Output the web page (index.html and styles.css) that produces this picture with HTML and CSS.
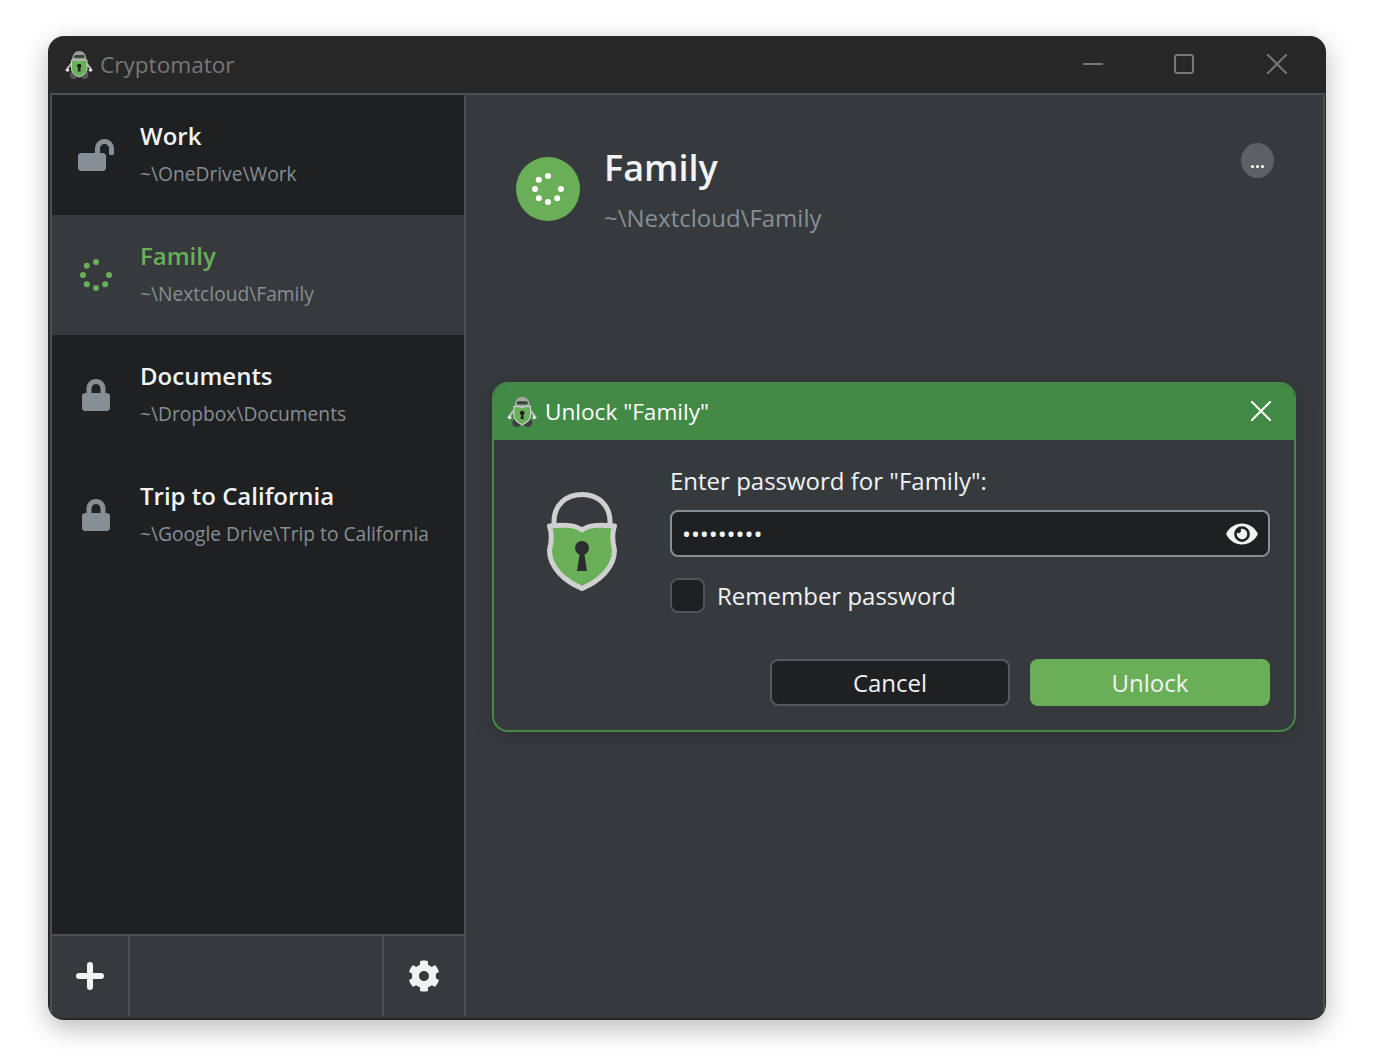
FILE: index.html
```html
<!DOCTYPE html>
<html lang="en">
<head>
    <meta charset="UTF-8">
    <title>Cryptomator</title>
    <link rel="stylesheet" href="styles.css">
</head>
<body>
    <div class="window">
        <div class="titlebar">
            <svg class="logo" viewBox="0 0 28 28">
                <path d="M7 12 2 18M21 12l5 6" fill="none" stroke="#a9acae" stroke-width="2.200"/>
                <path d="M0 19l3-2 1.500 2.500-2 1.500zM28 19l-3-2-1.500 2.500 2 1.500z" fill="#e4e4e4"/>
                <circle cx="9" cy="24" r="4" fill="#54575a"/>
                <circle cx="19.500" cy="24" r="4" fill="#54575a"/>
                <path d="M7 10C7 3 10 0 14.200 0s7.300 3 7.300 10z" fill="#9a9c9e"/>
                <rect x="9" y="4" width="10.500" height="3" rx="1.500" fill="#344a34"/>
                <path d="M6.500 9c3 0 5.700-.5 7.700 1 2-1.500 4.800-1 7.800-1v8.500c0 4.500-3.500 6.500-7.800 8.500-4.200-2-7.700-4-7.700-8.500z" fill="#69af58" stroke="#d2d2d2"/>
                <circle cx="14.200" cy="15" r="2.200" fill="#222"/>
                <path d="M13.500 16h1.400l.9 4.500h-3.200z" fill="#222"/>
            </svg>
            <span class="app-name">Cryptomator</span>
            <div class="win-controls">
                <svg viewBox="0 0 20 20"><path d="M0 10h20" /></svg>
                <svg viewBox="0 0 20 20"><rect x="1" y="1" width="18" height="18" rx="2"/></svg>
                <svg viewBox="0 0 20 20"><path d="M0 0l20 20M20 0 0 20"/></svg>
            </div>
        </div>

        <div class="main">
            <div class="sidebar">
                <div class="vault-list">
                    <div class="vault-row">
                        <div class="vault-icon">
                            <svg class="icon-unlock" viewBox="0 0 576 512"><path d="M423.500 0C339.500.3 272 69.500 272 153.500V224H48c-26.500 0-48 21.500-48 48v192c0 26.500 21.500 48 48 48h352c26.500 0 48-21.500 48-48V272c0-26.500-21.500-48-48-48h-48v-71.100c0-39.600 31.700-72.500 71.300-72.900 40-.4 72.700 32.100 72.700 72v80c0 13.300 10.700 24 24 24h32c13.300 0 24-10.700 24-24v-80C576 68 507.500-.3 423.500 0z"/></svg>
                        </div>
                        <div class="vault-text">
                            <div class="vault-name">Work</div>
                            <div class="vault-path">~\OneDrive\Work</div>
                        </div>
                    </div>
                    <div class="vault-row selected">
                        <div class="vault-icon">
                            <svg class="spinner" viewBox="0 0 32 32">
                                <circle cx="16" cy="3" r="3"/><circle cx="6.800" cy="6.800" r="3"/><circle cx="3" cy="16" r="3"/><circle cx="6.800" cy="25.200" r="3"/><circle cx="16" cy="29" r="3"/><circle cx="25.200" cy="25.200" r="3"/><circle cx="29" cy="16" r="3"/>
                            </svg>
                        </div>
                        <div class="vault-text">
                            <div class="vault-name">Family</div>
                            <div class="vault-path">~\Nextcloud\Family</div>
                        </div>
                    </div>
                    <div class="vault-row">
                        <div class="vault-icon">
                            <svg class="icon-lock" viewBox="0 0 448 512"><path d="M400 224h-24v-72C376 68.200 307.800 0 224 0S72 68.200 72 152v72H48c-26.500 0-48 21.500-48 48v192c0 26.500 21.500 48 48 48h352c26.500 0 48-21.500 48-48V272c0-26.500-21.500-48-48-48zm-104 0H152v-72c0-39.700 32.300-72 72-72s72 32.300 72 72v72z"/></svg>
                        </div>
                        <div class="vault-text">
                            <div class="vault-name">Documents</div>
                            <div class="vault-path">~\Dropbox\Documents</div>
                        </div>
                    </div>
                    <div class="vault-row">
                        <div class="vault-icon">
                            <svg class="icon-lock" viewBox="0 0 448 512"><path d="M400 224h-24v-72C376 68.200 307.800 0 224 0S72 68.200 72 152v72H48c-26.500 0-48 21.500-48 48v192c0 26.500 21.500 48 48 48h352c26.500 0 48-21.500 48-48V272c0-26.500-21.500-48-48-48zm-104 0H152v-72c0-39.700 32.300-72 72-72s72 32.300 72 72v72z"/></svg>
                        </div>
                        <div class="vault-text">
                            <div class="vault-name">Trip to California</div>
                            <div class="vault-path">~\Google Drive\Trip to California</div>
                        </div>
                    </div>
                </div>
                <div class="sidebar-footer">
                    <div class="footer-add">
                        <svg class="icon-plus" viewBox="0 0 28 28"><path d="M14 3v22M3 14h22"/></svg>
                    </div>
                    <div class="footer-gear">
                        <svg class="icon-gear" viewBox="0 0 512 512"><path d="M487.400 315.700l-42.600-24.600c4.300-23.200 4.300-47 0-70.200l42.600-24.600c4.900-2.800 7.100-8.600 5.500-14-11.100-35.600-30-67.800-54.700-94.600-3.800-4.100-10-5.100-14.800-2.300L380.800 110c-17.900-15.400-38.500-27.300-60.800-35.100V25.800c0-5.600-3.900-10.500-9.400-11.700-36.700-8.200-74.300-7.800-109.200 0-5.500 1.200-9.400 6.100-9.400 11.700V75c-22.200 7.900-42.800 19.800-60.800 35.100L88.700 85.500c-4.900-2.800-11-1.900-14.800 2.300-24.700 26.700-43.600 58.900-54.700 94.600-1.700 5.400.6 11.200 5.500 14L67.300 221c-4.300 23.200-4.300 47 0 70.200l-42.600 24.600c-4.900 2.800-7.100 8.600-5.500 14 11.100 35.600 30 67.800 54.700 94.600 3.800 4.100 10 5.100 14.800 2.300l42.600-24.600c17.900 15.400 38.500 27.300 60.800 35.100v49.200c0 5.600 3.900 10.500 9.400 11.700 36.700 8.200 74.300 7.800 109.200 0 5.500-1.200 9.400-6.100 9.400-11.700v-49.200c22.200-7.900 42.800-19.800 60.800-35.100l42.600 24.600c4.900 2.800 11 1.900 14.800-2.300 24.700-26.700 43.600-58.900 54.700-94.600 1.500-5.500-.7-11.300-5.600-14.100zM256 336c-44.100 0-80-35.900-80-80s35.900-80 80-80 80 35.900 80 80-35.900 80-80 80z"/></svg>
                    </div>
                </div>
            </div>

            <div class="detail">
                <div class="detail-header">
                    <div class="detail-badge">
                        <svg class="spinner-white" viewBox="0 0 32 32">
                            <circle cx="16" cy="3" r="3"/><circle cx="6.800" cy="6.800" r="3"/><circle cx="3" cy="16" r="3"/><circle cx="6.800" cy="25.200" r="3"/><circle cx="16" cy="29" r="3"/><circle cx="25.200" cy="25.200" r="3"/><circle cx="29" cy="16" r="3"/>
                        </svg>
                    </div>
                    <div class="detail-text">
                        <div class="detail-name">Family</div>
                        <div class="detail-path">~\Nextcloud\Family</div>
                    </div>
                    <div class="more-btn"><i></i><i></i><i></i></div>
                </div>

                <div class="dialog">
                    <div class="dialog-title">
                        <svg class="logo" viewBox="0 0 28 28">
                            <path d="M7 12 2 18M21 12l5 6" fill="none" stroke="#b9bcbe" stroke-width="2.200"/>
                            <path d="M0 19l3-2 1.500 2.500-2 1.500zM28 19l-3-2-1.500 2.500 2 1.500z" fill="#e4e4e4"/>
                            <circle cx="9" cy="24" r="4" fill="#3d4042"/>
                            <circle cx="19.500" cy="24" r="4" fill="#3d4042"/>
                            <path d="M7 10C7 3 10 0 14.200 0s7.300 3 7.300 10z" fill="#a5a7a8"/>
                            <rect x="9" y="4" width="10.500" height="3" rx="1.500" fill="#344a34"/>
                            <path d="M6.500 9c3 0 5.700-.5 7.700 1 2-1.500 4.800-1 7.800-1v8.500c0 4.500-3.500 6.500-7.800 8.500-4.200-2-7.700-4-7.700-8.500z" fill="#69af58" stroke="#d2d2d2"/>
                            <circle cx="14.200" cy="15" r="2.200" fill="#222"/>
                            <path d="M13.500 16h1.400l.9 4.500h-3.200z" fill="#222"/>
                        </svg>
                        <span class="dialog-caption">Unlock "Family"</span>
                        <svg class="dialog-close" viewBox="0 0 20 20"><path d="M0 0l20 20M20 0 0 20"/></svg>
                    </div>
                    <div class="dialog-body">
                        <div class="dialog-art">
                            <svg class="padlock" viewBox="0 0 70 100">
                                <path d="M7 36V30C7 13 19 2.500 35 2.500S63 13 63 30v6" fill="none" stroke="#d0d0d0" stroke-width="5"/>
                                <path d="M2.500 34C14 33 27 32 35 38 43 32 56 33 67.500 34 65 41 65 48 67.500 58 67.500 76 52 89 35 96.500 18 89 2.500 76 2.500 58 5 48 5 41 2.500 34Z" fill="#69af58" stroke="#d0d0d0" stroke-width="5" stroke-linejoin="round"/>
                                <circle cx="35" cy="56" r="7" fill="#2a2c2e"/>
                                <path d="M33 60h4l3 19H30z" fill="#2a2c2e"/>
                            </svg>
                        </div>
                        <div class="dialog-form">
                            <label class="pw-label">Enter password for "Family":</label>
                            <div class="pw-field">
                                <input class="pw-input" type="password" value="123456789">
                                <svg class="icon-eye" viewBox="0 0 576 512"><path d="M572.520 241.400C518.290 135.590 410.930 64 288 64S57.680 135.640 3.480 241.410a32.350 32.350 0 0 0 0 29.190C57.710 376.410 165.070 448 288 448s230.320-71.640 284.520-177.410a32.350 32.350 0 0 0 0-29.190zM288 400a144 144 0 1 1 144-144 143.930 143.930 0 0 1-144 144zm0-240a95.310 95.310 0 0 0-25.310 3.790 47.850 47.850 0 0 1-66.900 66.900A95.780 95.780 0 1 0 288 160z"/></svg>
                            </div>
                            <div class="remember">
                                <span class="checkbox"></span>
                                <span>Remember password</span>
                            </div>
                            <div class="dialog-buttons">
                                <div class="btn btn-cancel">Cancel</div>
                                <div class="btn btn-unlock">Unlock</div>
                            </div>
                        </div>
                    </div>
                </div>
            </div>
        </div>
    </div>
</body>
</html>
```

FILE: styles.css
```css
* {
    margin: 0;
    padding: 0;
    box-sizing: border-box;
}

body {
    background: #fff;
    font-family: 'Open Sans', sans-serif;
    font-size: 24px;
    color: #f1f3f5;
}

.window {
    display: flex;
    flex-direction: column;
    width: 1278px;
    height: 984px;
    margin: 36px 48px;
    background: #272727;
    border-radius: 16px;
    overflow: hidden;
    box-shadow: 0 8px 26px rgba(0, 0, 0, 0.28);
}

/* title bar */
.titlebar {
    display: flex;
    align-items: center;
    height: 57px;
    padding: 0 39px 0 17px;
    flex-shrink: 0;
}

.logo {
    width: 28px;
    height: 28px;
    flex-shrink: 0;
}

.app-name {
    margin-left: 7px;
    font-size: 22.600px;
    color: #777;
    line-height: 62px;
}

.win-controls {
    display: flex;
    gap: 72px;
    margin-left: auto;
    margin-top: -2px;
}

.win-controls svg {
    display: block;
    width: 20px;
    height: 20px;
    fill: none;
    stroke: #777;
    stroke-width: 2;
}

.win-controls svg:nth-child(2) {
    margin: 0 1px 0 -1px;
}

/* main area */
.main {
    display: flex;
    flex: 1;
    min-height: 0;
    margin: 0 1px 2px 2px;
    border: 2px solid #4a4f53;
    border-bottom: none;
    background: #363a3d;
}

.sidebar {
    display: flex;
    flex-direction: column;
    width: 414px;
    flex-shrink: 0;
}

.vault-list {
    flex: 1;
    background: #1f2022;
    border-bottom: 2px solid #4a4f53;
    border-right: 2px solid #4a4f53;
}

.vault-row {
    display: flex;
    align-items: center;
    height: 120px;
}

.vault-row.selected {
    background: #363a3d;
}

.vault-icon {
    display: flex;
    justify-content: center;
    width: 88px;
    flex-shrink: 0;
}

.vault-text {
    padding-bottom: 3px;
}

.vault-name {
    font-weight: 600;
    line-height: 32px;
    margin-bottom: 8px;
}

.vault-row.selected .vault-name {
    color: #69af58;
}

.vault-path {
    font-size: 19.200px;
    line-height: 28px;
    color: #868e96;
}

.icon-lock {
    display: block;
    width: 28px;
    height: 32px;
    fill: #868e96;
}

.icon-unlock {
    display: block;
    width: 36px;
    height: 32px;
    fill: #868e96;
}

.spinner {
    display: block;
    width: 32px;
    height: 32px;
    fill: #69af58;
}

/* sidebar footer */
.sidebar-footer {
    display: flex;
    justify-content: space-between;
    height: 82px;
    margin-left: -4px;
    padding-bottom: 2px;
}

.footer-add {
    display: flex;
    align-items: center;
    justify-content: center;
    width: 82px;
    padding-left: 4px;
    border-right: 2px solid #4a4f53;
}

.footer-gear {
    display: flex;
    align-items: center;
    justify-content: center;
    width: 84px;
    border-left: 2px solid #4a4f53;
    border-right: 2px solid #4a4f53;
}

.icon-plus {
    display: block;
    width: 28px;
    height: 28px;
    fill: none;
    stroke: #f1f3f5;
    stroke-width: 6;
    stroke-linecap: round;
}

.icon-gear {
    display: block;
    width: 32px;
    height: 32px;
    fill: #f1f3f5;
}

/* vault detail */
.detail {
    position: relative;
    flex: 1;
}

.detail-header {
    display: flex;
    align-items: flex-start;
    padding: 50px 49px 0 50px;
}

.detail-badge {
    display: flex;
    align-items: center;
    justify-content: center;
    width: 64px;
    height: 64px;
    margin-top: 12px;
    border-radius: 50%;
    background: #69af58;
    flex-shrink: 0;
}

.spinner-white {
    display: block;
    width: 32px;
    height: 32px;
    fill: #fff;
}

.detail-text {
    margin-left: 24px;
}

.detail-name {
    font-size: 36px;
    font-weight: 600;
    line-height: 48px;
    margin: -1px 0 10px;
}

.detail-path {
    line-height: 32px;
    color: #868e96;
}

.more-btn {
    display: flex;
    align-items: flex-end;
    justify-content: center;
    gap: 2px;
    width: 33px;
    height: 35px;
    margin: -2px 0 0 auto;
    padding-bottom: 10px;
    border-radius: 50%;
    background: #5d6165;
}

.more-btn i {
    width: 3px;
    height: 3px;
    border-radius: 50%;
    background: #fff;
}

/* unlock dialog */
.dialog {
    position: absolute;
    left: 26px;
    top: 287px;
    width: 804px;
    height: 350px;
    border: 2px solid #438a47;
    border-radius: 16px;
    background: #363a3d;
    overflow: hidden;
    box-shadow: 0 4px 20px rgba(0, 0, 0, 0.15);
}

.dialog-title {
    display: flex;
    align-items: center;
    height: 56px;
    padding: 0 23px 0 13px;
    background: #438a47;
}

.dialog-title .logo {
    width: 30px;
    height: 30px;
}

.dialog-caption {
    margin-left: 8px;
    font-size: 22.600px;
    line-height: 54px;
    color: #fff;
}

.dialog-close {
    display: block;
    width: 20px;
    height: 20px;
    margin: -2px 0 0 auto;
    fill: none;
    stroke: #fff;
    stroke-width: 2;
}

.dialog-body {
    display: flex;
    padding: 25px 24px 0 0;
}

.dialog-art {
    display: flex;
    justify-content: center;
    width: 176px;
    padding-top: 27px;
    flex-shrink: 0;
}

.padlock {
    display: block;
    width: 70px;
    height: 100px;
}

.dialog-form {
    flex: 1;
}

.pw-label {
    display: block;
    line-height: 32px;
    margin-bottom: 13px;
}

.pw-field {
    display: flex;
    align-items: center;
    height: 47px;
    padding: 0 10px;
    border: 2px solid #868e96;
    border-radius: 8px;
    background: #1f2022;
}

.pw-input {
    flex: 1;
    min-width: 0;
    border: none;
    outline: none;
    background: none;
    color: #f1f3f5;
    font-family: 'Open Sans', sans-serif;
    font-size: 24px;
    letter-spacing: -0.100px;
}

.icon-eye {
    display: block;
    width: 32px;
    height: 28px;
    fill: #f1f3f5;
}

.remember {
    display: flex;
    align-items: center;
    gap: 12px;
    margin-top: 21px;
}

.checkbox {
    width: 35px;
    height: 35px;
    border: 2px solid #4f5458;
    border-radius: 8px;
    background: #1f2022;
}

.dialog-buttons {
    display: flex;
    justify-content: flex-end;
    gap: 20px;
    margin-top: 46px;
}

.btn {
    width: 240px;
    height: 47px;
    line-height: 47px;
    border-radius: 8px;
    text-align: center;
}

.btn-cancel {
    border: 2px solid #55595d;
    line-height: 43px;
    background: #1f2022;
}

.btn-unlock {
    background: #69af58;
}
```
